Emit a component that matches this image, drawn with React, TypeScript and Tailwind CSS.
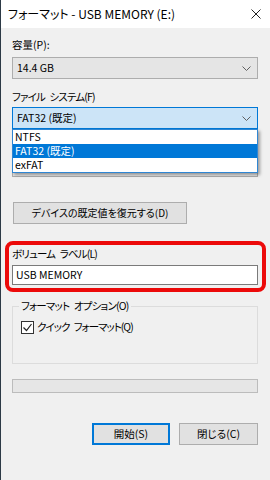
import React from "react";

const font = { fontFamily: '"Noto Sans CJK JP", "Noto Sans", sans-serif' };

function Chevron() {
  return (
    <svg width="9" height="5" viewBox="0 0 9 5" className="shrink-0">
      <path d="M0.5 0.5 L4.5 4.5 L8.5 0.5" fill="none" stroke="#606060" strokeWidth="1" />
    </svg>
  );
}

function Combo({ value, focused }: { value: string; focused?: boolean }) {
  return (
    <div
      className={
        focused
          ? "h-[22px] flex items-center justify-between pl-[4px] pr-[6px] border border-[#0078d7] bg-[#cce4f7]"
          : "h-[22px] flex items-center justify-between pl-[4px] pr-[6px] border border-[#adadad] bg-[#e5e5e5]"
      }
    >
      <span>{value}</span>
      <Chevron />
    </div>
  );
}

// kana labels: tight tracking, but keep the word gap visible
function Label({ a, b }: { a: string; b: string }) {
  return (
    <>
      <span className="mr-[3px]">{a}</span> {b}
    </>
  );
}

const options = ["NTFS", "FAT32 (既定)", "exFAT"];

export default function App() {
  return (
    <div
      className="w-[270px] h-[480px] bg-[#f0f0f0] border-l border-[#2d3a46] flex flex-col text-[10.5px] leading-[16px] text-black overflow-hidden [font-feature-settings:'palt']"
      style={font}
    >
      {/* title bar */}
      <div className="h-[28px] shrink-0 bg-white flex items-center justify-between pl-[7px] pr-[9px] text-[12px]">
        <span>フォーマット - USB MEMORY (E:)</span>
        <svg width="10" height="10" viewBox="0 0 10 10">
          <path d="M0.5 0.5 L9.5 9.5 M9.5 0.5 L0.5 9.5" stroke="#222" strokeWidth="1" />
        </svg>
      </div>

      <div className="flex flex-col pl-[11px] pr-[12px]">
        <div className="mt-[9px]">容量(P):</div>
        <div className="mt-[4px]">
          <Combo value="14.4 GB" />
        </div>

        <div className="mt-[10px] tracking-[-0.85px]">
          <Label a="ファイル" b="システム(F)" />
        </div>
        <div className="mt-[2px] relative">
          <Combo value="FAT32 (既定)" focused />
          <div className="absolute left-0 right-0 top-full z-10 bg-white border border-[#2f86d3] shadow-[2px_2px_3px_rgba(0,0,0,0.35)]">
            {options.map((o) => (
              <div
                key={o}
                className={
                  o === "FAT32 (既定)"
                    ? "h-[14px] leading-[14px] pl-[2px] bg-[#0078d7] text-white"
                    : "h-[14px] leading-[14px] pl-[2px]"
                }
              >
                {o}
              </div>
            ))}
          </div>
        </div>

        {/* allocation unit row, hidden under the open list */}
        <div className="mt-[9px] h-[16px]" />
        <div className="mt-[1px] h-[22px] border border-[#adadad] bg-[#e5e5e5]" />

        <button className="mt-[25px] w-[174px] h-[22px] ml-[1px] border border-[#adadad] bg-[#e1e1e1] text-center text-[10px]">
          デバイスの既定値を復元する(D)
        </button>

        {/* highlighted volume label */}
        <div className="mt-[17px] -ml-[7px] -mr-[8px] border-4 border-[#ec0a0a] rounded-[8px] pl-[3px] pr-[4px] pt-[1px] pb-[3px]">
          <div className="tracking-[-0.85px]">
            <Label a="ボリューム" b="ラベル(L)" />
          </div>
          <div className="mt-[3px] h-[20px] border border-[#7a7a7a] bg-white flex items-center pl-[3px]">
            USB MEMORY
          </div>
        </div>

        <fieldset className="mt-[6px] border border-[#dcdcdc] pl-[6px] pr-[6px] pb-[28px]">
          <legend className="px-[2px] tracking-[-0.8px]">
            <Label a="フォーマット" b="オプション(O)" />
          </legend>
          <div className="mt-[5px] ml-[2px] flex items-center gap-[3px]">
            <span className="w-[13px] h-[13px] border border-[#333] bg-white flex items-center justify-center">
              <svg width="11" height="11" viewBox="0 0 11 11">
                <path d="M1.5 5.5 L4.5 8.5 L9.5 2" fill="none" stroke="#222" strokeWidth="1.2" />
              </svg>
            </span>
            <span className="tracking-[-1px]">
              <Label a="クイック" b="フォーマット(Q)" />
            </span>
          </div>
        </fieldset>

        <div className="mt-[15px] h-[14px] border border-[#bcbcbc] bg-[#e6e6e6]" />

        <div className="mt-[30px] flex justify-end gap-[9px]">
          <button className="w-[78px] h-[22px] border-2 border-[#0078d7] bg-[#e1e1e1]">開始(S)</button>
          <button className="w-[79px] h-[22px] border border-[#adadad] bg-[#e1e1e1]">閉じる(C)</button>
        </div>
      </div>
    </div>
  );
}
